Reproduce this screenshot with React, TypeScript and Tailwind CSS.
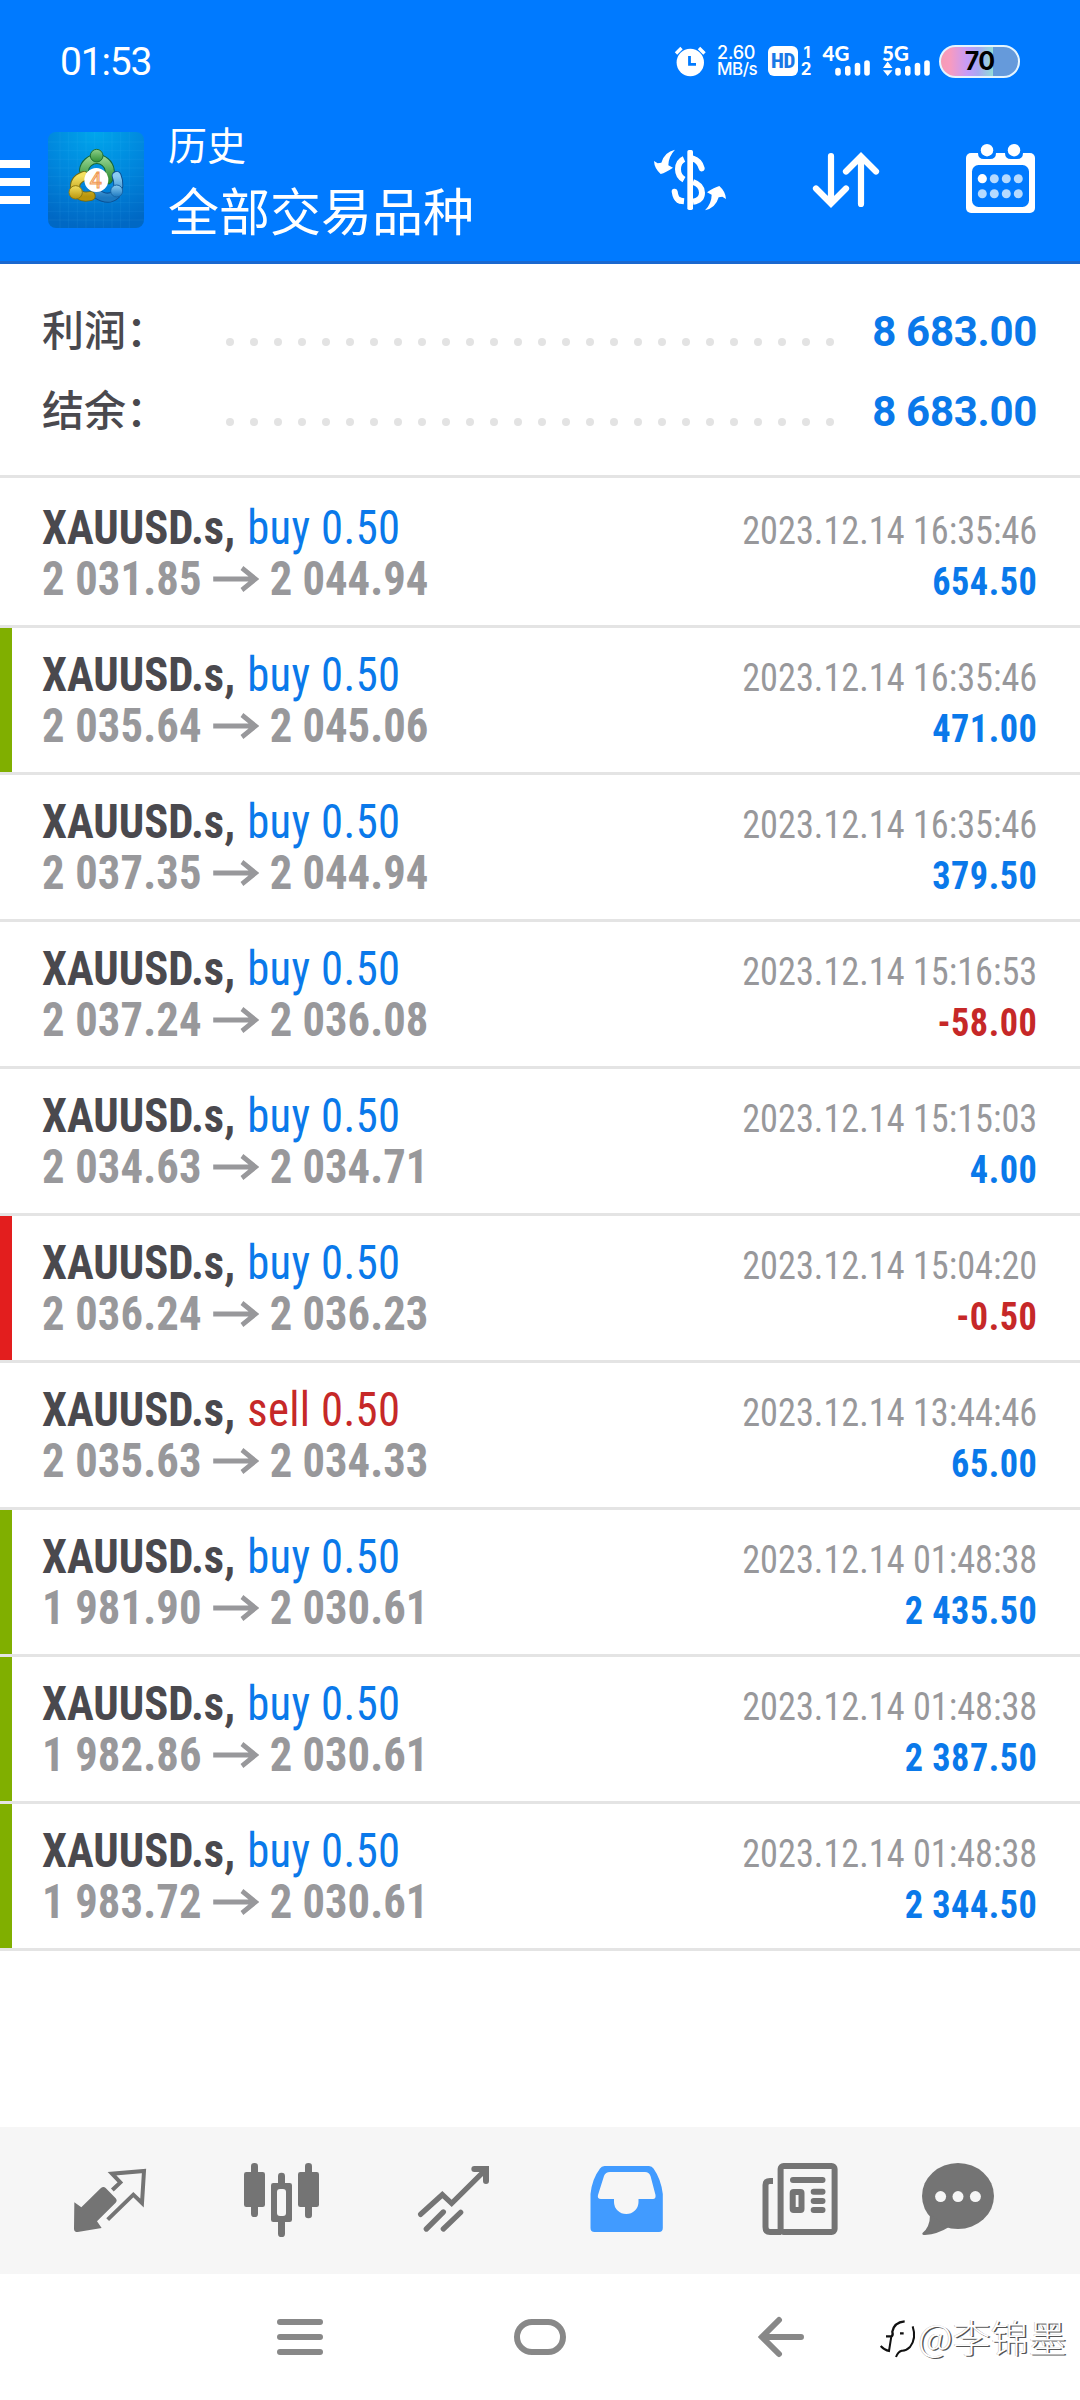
import type { ReactNode } from 'react';

type Deal = {
  side: 'buy' | 'sell';
  open: string;
  close: string;
  time: string;
  profit: string;
  mark?: 'tp' | 'sl';
};

const deals: Deal[] = [
  { side: 'buy', open: '2 031.85', close: '2 044.94', time: '2023.12.14 16:35:46', profit: '654.50' },
  { side: 'buy', open: '2 035.64', close: '2 045.06', time: '2023.12.14 16:35:46', profit: '471.00', mark: 'tp' },
  { side: 'buy', open: '2 037.35', close: '2 044.94', time: '2023.12.14 16:35:46', profit: '379.50' },
  { side: 'buy', open: '2 037.24', close: '2 036.08', time: '2023.12.14 15:16:53', profit: '-58.00' },
  { side: 'buy', open: '2 034.63', close: '2 034.71', time: '2023.12.14 15:15:03', profit: '4.00' },
  { side: 'buy', open: '2 036.24', close: '2 036.23', time: '2023.12.14 15:04:20', profit: '-0.50', mark: 'sl' },
  { side: 'sell', open: '2 035.63', close: '2 034.33', time: '2023.12.14 13:44:46', profit: '65.00' },
  { side: 'buy', open: '1 981.90', close: '2 030.61', time: '2023.12.14 01:48:38', profit: '2 435.50', mark: 'tp' },
  { side: 'buy', open: '1 982.86', close: '2 030.61', time: '2023.12.14 01:48:38', profit: '2 387.50', mark: 'tp' },
  { side: 'buy', open: '1 983.72', close: '2 030.61', time: '2023.12.14 01:48:38', profit: '2 344.50', mark: 'tp' },
];

function StatusBar() {
  return (
    <div className="flex h-[111px] items-center pt-[11px] text-white">
      <span className="ml-[60px] w-[100px] pt-[3px] text-[39px] tracking-[-1.2px] [font-weight:440]">01:53</span>
      <svg className="ml-[514px] shrink-0" width="32" height="34" viewBox="674 43 32 34">
        <circle cx="690.3" cy="61.5" r="13.7" fill="#fff" />
        <path d="M676 52.5 681.5 47M704.5 52.5 699 47" stroke="#fff" strokeWidth="3.4" />
        <path d="M689.5 55V63.3H696" fill="none" stroke="#007aff" strokeWidth="2.8" />
      </svg>
      <div className="ml-[11px] w-[44px] font-['Inter'] text-[17px] leading-[16px] font-medium whitespace-nowrap">
        <div className="text-[18px] tracking-[-0.2px]">2.60</div>
        <div className="tracking-[-0.5px]">MB/s</div>
      </div>
      <div className="ml-[7px] flex h-[30px] w-[30px] shrink-0 items-center justify-center rounded-[6px] bg-white font-['Roboto'] text-[21px] leading-[30px] font-extrabold tracking-[-0.4px] text-[#1a78e6] [font-stretch:82%]">
        HD
      </div>
      <div className="ml-[2px] w-[12px] text-center font-['Inter'] text-[16px] leading-[17px] font-bold">
        <div className="pl-[2px]">1</div>
        <div className="text-[17px]">2</div>
      </div>
      <svg className="ml-[10px] shrink-0 font-['Lato']" width="50" height="46" viewBox="821 37 50 46">
        <text x="821.5" y="60" fontSize="20.5" fontWeight="900" fill="#fff">4G</text>
        <path d="M837 69.5V72M846.8 67.5V72M856.5 64.5V72M866 62V72" stroke="#fff" strokeWidth="5.6" strokeLinecap="round" />
      </svg>
      <svg className="ml-[9px] shrink-0 font-['Lato']" width="50" height="46" viewBox="880 37 50 46">
        <text x="881" y="60" fontSize="20.5" fontWeight="900" fill="#fff">5G</text>
        <path d="M882 67 886.7 60.5 891.5 67ZM882 69.3H891.5L886.7 75Z" fill="#fff" />
        <path d="M897 69.5V72M906.8 67.5V72M916.5 64.5V72M926 62V72" stroke="#fff" strokeWidth="5.6" strokeLinecap="round" />
      </svg>
      <div className="ml-[8px] flex h-[33px] w-[81px] items-center justify-center rounded-full border-2 border-[#e4f5ff] bg-[linear-gradient(90deg,#f79bb4_0%,#f79bc0_12%,#c69bf8_34%,#a8a8f0_48%,#94d8da_66%,#9be0d6_68%,#659adb_68%)] font-['Inter'] text-[25px] leading-[29px] font-bold tracking-[-0.8px] text-black">
        70
      </div>
    </div>
  );
}

function AppLogo() {
  return (
    <svg className="ml-[18px] mt-[21px] shrink-0" width="96" height="96" viewBox="54 36 288 288">
      <defs>
        <radialGradient id="sky" cx="0.5" cy="0" r="1">
          <stop offset="0" stopColor="#00a6ec" />
          <stop offset="0.55" stopColor="#0085dc" />
          <stop offset="1" stopColor="#0068c4" />
        </radialGradient>
        <linearGradient id="green" x1="0" y1="0" x2="0" y2="1">
          <stop offset="0" stopColor="#8fd08a" />
          <stop offset="1" stopColor="#2f8f35" />
        </linearGradient>
        <linearGradient id="yellow" x1="0" y1="0" x2="0" y2="1">
          <stop offset="0" stopColor="#f3e060" />
          <stop offset="1" stopColor="#b8940a" />
        </linearGradient>
        <linearGradient id="blue" x1="0" y1="0" x2="0" y2="1">
          <stop offset="0" stopColor="#8accf2" />
          <stop offset="1" stopColor="#1c78c0" />
        </linearGradient>
      </defs>
      <rect x="54" y="36" width="288" height="288" rx="24" fill="url(#sky)" />
      <path
        d="M90 36V324M116 36V324M142 36V324M168 36V324M194 36V324M220 36V324M246 36V324M272 36V324M298 36V324M54 66H342M54 92H342M54 118H342M54 144H342M54 170H342M54 196H342M54 222H342M54 248H342M54 274H342M54 300H342"
        stroke="#5cc4ff"
        strokeOpacity="0.14"
        strokeWidth="2"
      />
      <g fill="none" strokeLinecap="round">
        <path d="M162 150A39 39 0 0 1 239 150Q242 164 234 178" stroke="#14663a" strokeWidth="30" />
        <path d="M162 150A39 39 0 0 1 239 150Q242 164 234 178" stroke="url(#green)" strokeWidth="24" />
        <path d="M260 168Q272 198 256 224Q234 244 198 220" stroke="#0c4f92" strokeWidth="30" />
        <path d="M260 168Q272 198 256 224Q234 244 198 220" stroke="url(#blue)" strokeWidth="24" />
        <path d="M162 168Q130 180 136 210Q150 236 182 228" stroke="#6f6a14" strokeWidth="30" />
        <path d="M162 168Q130 180 136 210Q150 236 182 228" stroke="url(#yellow)" strokeWidth="24" />
      </g>
      <circle cx="200" cy="107" r="19" fill="url(#green)" stroke="#1f6f33" strokeWidth="3" />
      <circle cx="137" cy="217" r="20" fill="url(#yellow)" stroke="#8c7a12" strokeWidth="3" />
      <circle cx="260" cy="213" r="18" fill="url(#blue)" stroke="#1766a8" strokeWidth="3" />
      <circle cx="199" cy="180" r="36" fill="#fff" />
      <text x="197" y="203" textAnchor="middle" className="font-['Roboto']" fontSize="64" fill="#ffe2c0" stroke="#f09a55" strokeWidth="3">
        4
      </text>
    </svg>
  );
}

function Header() {
  return (
    <div className="h-[264px] border-b-[3px] border-[#1a68cf] bg-[#007aff]">
      <StatusBar />
      <div className="flex items-start">
        <div className="mt-[49px] flex w-[30px] flex-col gap-[10px]">
          <div className="h-[8px] bg-white" />
          <div className="h-[8px] bg-white" />
          <div className="h-[8px] bg-white" />
        </div>
        <AppLogo />
        <div className="ml-[24px] mt-[4px] w-[320px] font-['Noto_Sans_CJK_SC'] font-normal text-white">
          <div className="text-[39px] leading-[57px]">历史</div>
          <div className="text-[51px] leading-[75px]">全部交易品种</div>
        </div>
        <svg className="ml-[163px] mt-[36px] shrink-0" width="78" height="66" viewBox="18 21 234 198">
          <path d="M90 29Q58 36 49 68L38 70L27 63Q28 85 47 102Q62 98 84 83L70 76Q70 50 90 29Z" fill="#fff" />
          <path d="M180 211Q212 204 221 172L232 170L243 177Q242 155 223 138Q208 142 186 157L200 164Q200 190 180 211Z" fill="#fff" />
          <g fill="none" stroke="#fff" strokeWidth="18">
            <path d="M117 57Q99 65 99 88Q99 109 117 119M144 126Q171 135 171 158Q171 181 144 185" />
            <path d="M144 56Q164 62 170 85M89 155Q92 176 102 181" strokeLinecap="round" />
            <path d="M98 178Q106 183 117 184" />
          </g>
          <rect x="127" y="30" width="17" height="180" rx="5" fill="#fff" />
        </svg>
        <svg className="ml-[82px] mt-[36px] shrink-0" width="70" height="66" viewBox="811 147 70 66" fill="none" stroke="#fff" strokeWidth="6.2" strokeLinecap="round">
          <path d="M831 156V203M816 188.5 831 203.5 846 188.5M861 204V157M846 171.5 861 156.5 876 171.5" />
        </svg>
        <svg className="ml-[84px] mt-[30px] shrink-0" width="72" height="75" viewBox="965 141 72 75">
          <rect x="966" y="153" width="69" height="60" rx="5" fill="#fff" />
          <rect x="972" y="165" width="57" height="42" rx="6.5" fill="#007aff" />
          <path d="M978 150H996V153Q996 159 990 159H984Q978 159 978 153ZM1005 150H1023V153Q1023 159 1017 159H1011Q1005 159 1005 153Z" fill="#007aff" />
          <circle cx="987" cy="150.2" r="6.2" fill="#fff" />
          <circle cx="1014" cy="150.2" r="6.2" fill="#fff" />
          <circle cx="982.3" cy="178.7" r="4.6" fill="#fff" />
          <g fill="#b5daff">
            <circle cx="994.3" cy="178.7" r="4.5" />
            <circle cx="1006.3" cy="178.7" r="4.5" />
            <circle cx="1018.3" cy="178.7" r="4.5" />
            <circle cx="982.3" cy="193.7" r="4.5" />
            <circle cx="994.3" cy="193.7" r="4.5" />
            <circle cx="1006.3" cy="193.7" r="4.5" />
            <circle cx="1018.3" cy="193.7" r="4.5" />
          </g>
        </svg>
      </div>
    </div>
  );
}

function SummaryRow({ label, value }: { label: string; value: string }) {
  return (
    <div className="flex h-[80px] items-baseline justify-between pr-[43px] pl-[42px] leading-[80px]">
      <span className="w-[184px] font-['Noto_Sans_CJK_SC'] text-[42px] font-medium text-[#4a494e]">{label}</span>
      <span className="flex flex-1 gap-[16px]">
        {Array.from({ length: 26 }, (_, i) => (
          <span key={i} className="mb-[2px] h-[8px] w-[8px] rounded-full bg-[#e3e3e3]" />
        ))}
      </span>
      <span className="font-['Roboto'] text-[42px] font-bold tracking-[-0.3px] text-[#0a79ea]">{value}</span>
    </div>
  );
}

function DealRow({ deal, first }: { deal: Deal; first: boolean }) {
  const bar = deal.mark === 'tp' ? 'bg-[#80af00]' : deal.mark === 'sl' ? 'bg-[#e31e1e]' : 'bg-transparent';
  return (
    <div className={`flex border-b-[3px] border-[#e4e4e4] ${first ? 'h-[150px] pt-[3px]' : 'h-[147px]'}`}>
      <div className={`w-[12px] ${bar}`} />
      <div className="flex flex-1 justify-between pr-[43px] pl-[30px] font-['Roboto'] leading-[51px] whitespace-nowrap [font-stretch:75%]">
        <div className="origin-left scale-x-[0.93] pt-[21px] text-[48px]">
          <div>
            <span className="font-bold text-[#4a494e]">XAUUSD.s,</span>{' '}
            <span className={`ml-[2px] tracking-[0.4px] [font-weight:430] ${deal.side === 'buy' ? 'text-[#0a79ea]' : 'text-[#c62828]'}`}>
              {deal.side} 0.50
            </span>
          </div>
          <div className="flex font-bold text-[#98989b]">
            <span className="tracking-[0.15px]">{deal.open}</span>
            <svg className="mt-[11px] mr-[11px] ml-[12px]" width="50" height="30" viewBox="0 0 50 30" fill="none" stroke="#98989b" strokeWidth="5">
              <path d="M0 15H46M31 4 45.5 15 31 26" />
            </svg>
            {deal.close}
          </div>
        </div>
        <div className="origin-right scale-x-[0.93] pt-[25px] text-right text-[39px]">
          <div className="text-[#98989b] [font-weight:420]">{deal.time}</div>
          <div className={`font-bold tracking-[0.5px] ${deal.profit.startsWith('-') ? 'text-[#c62828]' : 'text-[#0a79ea]'}`}>{deal.profit}</div>
        </div>
      </div>
    </div>
  );
}

function TabIcon({ box, className, children }: { box: string; className: string; children: ReactNode }) {
  return (
    <svg className={`shrink-0 ${className}`} width="78" height="81" viewBox={box}>
      {children}
    </svg>
  );
}

function TabBar() {
  return (
    <div className="flex h-[147px] items-center bg-[#f6f6f6]">
      <TabIcon box="36 30 234 243" className="ml-[72px]">
        <path d="M43 157 64 172 122 115Q130 108 137 114L167 145Q173 152 167 158L111 214 125 234 53 246Q42 246 42 236Z" fill="#747474" />
        <path d="M157 120 181 97 156 71 252 63 246 159 220 134 143 209" fill="none" stroke="#747474" strokeWidth="12" />
      </TabIcon>
      <TabIcon box="549 30 234 243" className="ml-[93px]">
        <g fill="#747474">
          <rect x="552" y="66" width="63" height="105" rx="7" />
          <rect x="573" y="39" width="21" height="162" rx="10" />
          <rect x="714" y="66" width="63" height="105" rx="7" />
          <rect x="735" y="39" width="21" height="166" rx="10" />
          <rect x="633" y="99" width="63" height="117" rx="7" />
          <rect x="654" y="68" width="21" height="193" rx="10" />
        </g>
        <rect x="651" y="117" width="27" height="81" rx="9" fill="#f6f6f6" />
      </TabIcon>
      <TabIcon box="1068 30 234 243" className="ml-[95px]">
        <g fill="none" stroke="#747474" strokeWidth="16" strokeLinecap="round">
          <path d="M1082 193 1147 134 1175 160 1274 62M1099 237 1150 186M1150 237 1202 187" />
          <path d="M1243 57H1278V93" strokeWidth="18" />
        </g>
      </TabIcon>
      <TabIcon box="588 2160 78 81" className="ml-[94px]">
        <path
          d="M590.5 2194Q592 2179 600 2168.5Q601.5 2166 604.5 2166H649Q652 2166 653.5 2168.5Q661 2179 662.8 2194V2228Q662.8 2232 659 2232H594.5Q590.5 2232 590.5 2228Z"
          fill="#419bff"
        />
        <path
          d="M610 2172H645Q649 2172 650.5 2176L655.5 2195Q656 2199 653 2199H638.5V2202A12.2 12 0 0 1 614 2202V2199H601Q597 2199 598 2195L604 2176Q605.5 2172 610 2172Z"
          fill="#f6f6f6"
        />
      </TabIcon>
      <TabIcon box="762 2160 78 81" className="ml-[96px]">
        <g fill="none" stroke="#747474" strokeWidth="6">
          <rect x="780.6" y="2166" width="54" height="66" rx="3" />
          <path d="M773 2181H770Q765.5 2181 765.5 2185V2227Q765.5 2232 770 2232H781" />
          <path d="M793 2180H822.5M813.7 2191.7H822.5M813.7 2201H822.5M813.7 2210H822.5" strokeLinecap="round" />
          <rect x="792.7" y="2192" width="8.8" height="18" rx="1" />
        </g>
      </TabIcon>
      <TabIcon box="920 2160 78 81" className="ml-[80px]">
        <ellipse cx="958" cy="2196" rx="36" ry="33" fill="#747474" />
        <path d="M930 2215Q930 2227 922.5 2233Q921.5 2235 925 2235Q938 2234 949 2227Z" fill="#747474" />
        <circle cx="940.6" cy="2196.6" r="5.5" fill="#f6f6f6" />
        <circle cx="958" cy="2196.6" r="5.5" fill="#f6f6f6" />
        <circle cx="975.4" cy="2196.6" r="5.5" fill="#f6f6f6" />
      </TabIcon>
    </div>
  );
}

function SystemNav() {
  return (
    <div className="flex h-[126px] items-center">
      <div className="ml-[277px] flex w-[46px] flex-col gap-[9px]">
        <div className="h-[6px] rounded-full bg-[#888]" />
        <div className="h-[6px] rounded-full bg-[#888]" />
        <div className="h-[6px] rounded-full bg-[#888]" />
      </div>
      <div className="ml-[191px] h-[36px] w-[52px] rounded-full border-[6px] border-[#888]" />
      <svg className="ml-[192px] shrink-0" width="48" height="44" viewBox="758 2315 48 44" fill="none" stroke="#888" strokeWidth="6" strokeLinecap="round">
        <path d="M801 2337H762M779 2320 762 2337 779 2354" />
      </svg>
      <svg className="ml-[72px] shrink-0" width="40" height="44" viewBox="24 34 120 132" fill="none" stroke="#111" strokeWidth="6">
        <path d="M48 98H64Q70 96 67 84Q72 56 104 53M90 89H101" strokeWidth="7" />
        <path d="M128 68Q140 104 120 130Q108 142 95 141Q84 144 78 160M64 98 57 142Q44 140 32 127" />
      </svg>
      <span className="mb-[3px] font-['Noto_Sans_CJK_SC'] text-[38px] leading-[44px] font-light whitespace-nowrap text-white [text-shadow:1.4px_1.4px_0.6px_#555,-0.5px_-0.5px_0.6px_#bbb]">
        @李锦墨
      </span>
    </div>
  );
}

export default function App() {
  return (
    <div className="flex h-[2400px] w-[1080px] flex-col overflow-hidden bg-white font-['Roboto',sans-serif]">
      <Header />
      <div className="h-[214px] border-b-[3px] border-[#e4e4e4] pt-[24px]">
        <SummaryRow label="利润：" value="8 683.00" />
        <SummaryRow label="结余：" value="8 683.00" />
      </div>
      <div className="flex-1">
        {deals.map((deal, i) => (
          <DealRow key={i} deal={deal} first={i === 0} />
        ))}
      </div>
      <TabBar />
      <SystemNav />
    </div>
  );
}
